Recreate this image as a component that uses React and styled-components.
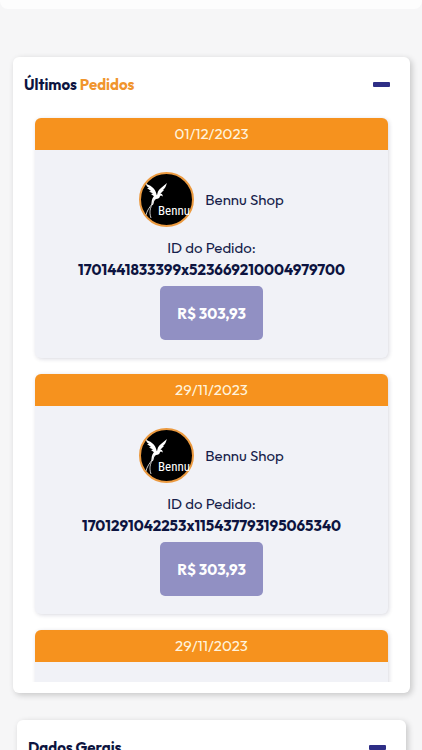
import { useState } from "react";
import styled, { createGlobalStyle } from "styled-components";

const GlobalStyle = createGlobalStyle`
  * {
    box-sizing: border-box;
  }

  body {
    margin: 0;
    background: #f6f6f7;
    color: #0d1440;
    font-family: Outfit, Lato, sans-serif;
    font-size: 15px;
    line-height: 20px;
  }
`;

const Page = styled.main`
  height: 100vh;
  overflow: hidden;
`;

const PreviousPanel = styled.div`
  height: 9px;
  border-radius: 0 0 8px 8px;
  background: #fdfdfd;
`;

const Panel = styled.section`
  margin: ${({ $nested }) => ($nested ? "27px 16px 0 17px" : "48px 12px 0 13px")};
  padding-bottom: 11px;
  border-radius: 6px;
  background: #fff;
  box-shadow: 2px 2px 6px rgba(0, 0, 0, 0.2);
`;

const PanelHeader = styled.header`
  display: flex;
  align-items: center;
  justify-content: space-between;
  height: 55px;
  padding: 0 20px 0 11px;
`;

const Title = styled.h2`
  margin: 0;
  font-size: 15px;
  font-weight: 700;
`;

const Highlight = styled.span`
  color: #f0952d;
`;

const Toggle = styled.button`
  display: flex;
  align-items: center;
  height: 20px;
  padding: 0;
  border: 0;
  background: none;
  cursor: pointer;
`;

const OrderList = styled.ul`
  display: flex;
  flex-direction: column;
  gap: 16px;
  max-height: 570px;
  margin: 0;
  padding: 6px 22px;
  overflow-y: auto;
  scrollbar-width: none;
  list-style: none;
`;

const Order = styled.li`
  flex-shrink: 0;
  border-radius: 6px;
  background: #f1f2f7;
  box-shadow: 1px 1px 4px rgba(20, 20, 60, 0.16);
  text-align: center;
`;

const OrderDate = styled.div`
  padding: 6px;
  border-radius: 6px 6px 0 0;
  background: #f6921e;
  color: #fff3dc;
`;

const OrderBody = styled.div`
  display: flex;
  flex-direction: column;
  align-items: center;
  padding: 22px 8px 18px;
  color: #171e4b;
`;

const Shop = styled.div`
  display: flex;
  align-items: center;
  gap: 11px;
  margin-bottom: 11px;
`;

const Avatar = styled.svg`
  display: block;
  width: 55px;
  height: 55px;
`;

const LogoText = styled.text`
  fill: #fff;
  font-family: "Roboto Condensed", Roboto, sans-serif;
  font-size: 13px;
`;

const OrderId = styled.strong`
  margin: 2px 0 6px;
  color: #0d1440;
  font-weight: 700;
`;

const Price = styled.button`
  height: 54px;
  padding: 0 17px;
  border: 0;
  border-radius: 5px;
  background: #9190c3;
  color: #fff;
  font-family: inherit;
  font-size: 15px;
  font-weight: 700;
  cursor: pointer;
`;

const orders = [
  { id: "1701441833399x523669210004979700", date: "01/12/2023" },
  { id: "1701291042253x115437793195065340", date: "29/11/2023" },
  { id: "1701290871640x802715936224018430", date: "29/11/2023" },
];

function BennuLogo() {
  return (
    <Avatar viewBox="0 0 55 55" role="img" aria-label="Bennu">
      <circle cx="27.5" cy="27.5" r="26.5" fill="#000" stroke="#eb9a40" strokeWidth="2" />
      {/* wings */}
      <path
        fill="#fff"
        d="M7 11c1 2 4 2 6 4 3 2 4 5 5 9l-2 1-4-3 2-.5-4-2 2-.5-4-3 2 0C8 15 7 13 7 11z"
      />
      <path
        fill="#fff"
        d="M28 11c-1 2-1 4-3 6l-1 1 1 0-3 3-2 3-2 1c0-4 1-7 4-9 2-2 4-3 6-5z"
      />
      {/* body and head */}
      <path
        fill="#fff"
        d="M15 24l3-1 3-1.5 2 .5 1 2.5-2-1-1 .5c0 2-2 3-4 3-2 1-2 3-3 6l-1.500 0c0-3 0-6 2.500-9z"
      />
      {/* tail feathers */}
      <path
        fill="none"
        stroke="#ddd"
        strokeWidth="0.9"
        d="M15 27c-1 6-6 8-8 16M14 31c-3 5-4 9-2 15"
      />
      <LogoText x="19" y="43">
        Bennu
      </LogoText>
    </Avatar>
  );
}

function OrderCard({ order }) {
  return (
    <Order>
      <OrderDate>{order.date}</OrderDate>
      <OrderBody>
        <Shop>
          <BennuLogo />
          <span>Bennu Shop</span>
        </Shop>
        <span>ID do Pedido:</span>
        <OrderId>{order.id}</OrderId>
        <Price type="button">R$ 303,93</Price>
      </OrderBody>
    </Order>
  );
}

function CollapsiblePanel({ title, label, nested, children }) {
  const [open, setOpen] = useState(true);

  return (
    <Panel $nested={nested}>
      <PanelHeader>
        <Title>{title}</Title>
        <Toggle
          type="button"
          aria-label={label}
          aria-expanded={open}
          onClick={() => setOpen(!open)}
        >
          <svg width="17" height="5" aria-hidden="true">
            <rect width="17" height="5" rx="1" fill="#2e2e86" />
          </svg>
        </Toggle>
      </PanelHeader>
      {open && children}
    </Panel>
  );
}

function App() {
  return (
    <>
      <GlobalStyle />
      <Page>
        <PreviousPanel />
        <CollapsiblePanel
          label="Últimos Pedidos"
          title={
            <>
              Últimos <Highlight>Pedidos</Highlight>
            </>
          }
        >
          <OrderList>
            {orders.map((order) => (
              <OrderCard key={order.id} order={order} />
            ))}
          </OrderList>
        </CollapsiblePanel>
        <CollapsiblePanel nested label="Dados Gerais" title="Dados Gerais" />
      </Page>
    </>
  );
}

export default App;
